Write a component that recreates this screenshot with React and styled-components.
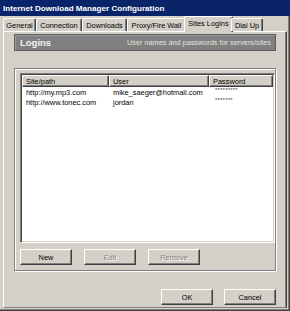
import React from 'react';
import styled, { createGlobalStyle } from 'styled-components';

const GlobalStyle = createGlobalStyle`
  html, body {
    margin: 0;
    padding: 0;
    background: #d4d0c8;
  }
  * {
    box-sizing: border-box;
  }
`;

const Window = styled.div`
  width: 290px;
  height: 311px;
  background: #d4d0c8;
  display: flex;
  flex-direction: column;
  font-family: 'Liberation Sans', Arial, sans-serif;
  font-size: 7.4px;
  color: #000;
  box-shadow: inset -1px -1px 0 #404040, inset -2px -2px 0 #808080;
  overflow: hidden;
`;

const TitleBar = styled.div`
  height: 16px;
  flex: none;
  background: #0a246a;
  color: #fff;
  font-weight: bold;
  font-size: 8.1px;
  display: flex;
  align-items: center;
  padding-left: 3px;
`;

const Body = styled.div`
  flex: 1;
  display: flex;
  flex-direction: column;
  padding: 0 3px 3px 3px;
`;

const TabStrip = styled.div`
  height: 15px;
  flex: none;
  display: flex;
  align-items: flex-end;
  position: relative;
  z-index: 1;
`;

const Tab = styled.div`
  width: ${p => p.$w}px;
  height: ${p => (p.$active ? 16 : 13)}px;
  margin: ${p => (p.$active ? '0 -2px -1px -2px' : '0')};
  padding-bottom: ${p => (p.$active ? 2 : 0)}px;
  background: #d4d0c8;
  border-top: 1px solid #fff;
  border-left: 1px solid #fff;
  border-right: 1px solid #404040;
  box-shadow: inset -1px 0 0 #808080;
  border-radius: 2px 2px 0 0;
  display: flex;
  align-items: center;
  justify-content: center;
  white-space: nowrap;
`;

const Panel = styled.div`
  flex: 1;
  display: flex;
  flex-direction: column;
  border-top: 1px solid #fff;
  border-left: 1px solid #fff;
  border-right: 1px solid #404040;
  border-bottom: 1px solid #808080;
  box-shadow: inset -1px 0 0 #808080;
  padding: 0 10px 0 10px;
`;

const HeaderBar = styled.div`
  margin-top: 2px;
  height: 17px;
  background: #808080;
  border: 1px solid #5c5c5c;
  box-shadow: inset 1px 1px 0 #9a9a9a;
  display: flex;
  align-items: center;
  justify-content: space-between;
  padding: 0 4px 0 5px;
`;

const HeaderTitle = styled.span`
  font-weight: bold;
  font-size: 9.5px;
  color: #f2f2f2;
`;

const HeaderNote = styled.span`
  font-size: 7.3px;
  color: #e4e2dc;
`;

const GroupBox = styled.div`
  margin-top: 17px;
  border: 1px solid #808080;
  box-shadow: inset 1px 1px 0 #fff, 1px 1px 0 #fff;
  padding: 4px 0 5px 5px;
  display: flex;
  flex-direction: column;
`;

const ListView = styled.div`
  height: 170px;
  background: #fff;
  border-top: 1px solid #808080;
  border-left: 1px solid #808080;
  border-right: 1px solid #fff;
  border-bottom: 1px solid #fff;
  box-shadow: inset 1px 1px 0 #404040, inset -1px -1px 0 #d4d0c8;
  padding: 1px;
  display: flex;
  flex-direction: column;
`;

const Row = styled.div`
  display: grid;
  grid-template-columns: 87px 100px 1fr;
  height: ${p => (p.$head ? 12 : 10)}px;
  align-items: center;
`;

const HeadCell = styled.div`
  height: 12px;
  background: #d4d0c8;
  border-top: 1px solid #fff;
  border-left: 1px solid #fff;
  border-right: 1px solid #404040;
  border-bottom: 1px solid #404040;
  box-shadow: inset -1px -1px 0 #808080;
  display: flex;
  align-items: center;
  padding-left: 3px;
  white-space: nowrap;
`;

const Cell = styled.div`
  padding-left: ${p => (p.$stars ? 6 : 4)}px;
  white-space: nowrap;
  overflow: hidden;
  font-size: ${p => (p.$stars ? 6 : 7.4)}px;
  letter-spacing: ${p => (p.$stars ? '0.2px' : 'normal')};
  align-self: ${p => (p.$stars ? 'start' : 'center')};
  color: ${p => (p.$stars ? '#444' : '#000')};
`;

const ButtonRow = styled.div`
  display: flex;
  gap: ${p => p.$gap}px;
  margin-top: ${p => p.$top}px;
  justify-content: ${p => (p.$right ? 'flex-end' : 'flex-start')};
`;

const Button = styled.div`
  width: 52px;
  height: 16px;
  background: #d4d0c8;
  border-top: 1px solid #fff;
  border-left: 1px solid #fff;
  border-right: 1px solid #404040;
  border-bottom: 1px solid #404040;
  box-shadow: inset -1px -1px 0 #808080;
  display: flex;
  align-items: center;
  justify-content: center;
  color: ${p => (p.$disabled ? '#808080' : '#000')};
  text-shadow: ${p => (p.$disabled ? '1px 1px 0 #fff' : 'none')};
`;

const tabs = [
  { label: 'General', w: 33 },
  { label: 'Connection', w: 46 },
  { label: 'Downloads', w: 45 },
  { label: 'Proxy/Fire Wall', w: 59 },
  { label: 'Sites Logins', w: 49, active: true },
  { label: 'Dial Up', w: 32 }
];

const logins = [
  { site: 'http://my.mp3.com', user: 'mike_saeger@hotmail.com', pass: '*********' },
  { site: 'http://www.tonec.com', user: 'jordan', pass: '*******' }
];

export default function App() {
  return (
    <>
      <GlobalStyle />
      <Window>
        <TitleBar>Internet Download Manager Configuration</TitleBar>
        <Body>
          <TabStrip>
            {tabs.map(t => (
              <Tab key={t.label} $w={t.w} $active={t.active}>
                {t.label}
              </Tab>
            ))}
          </TabStrip>
          <Panel>
            <HeaderBar>
              <HeaderTitle>Logins</HeaderTitle>
              <HeaderNote>User names and passwords for servers/sites</HeaderNote>
            </HeaderBar>
            <GroupBox>
              <ListView>
                <Row $head>
                  <HeadCell>Site/path</HeadCell>
                  <HeadCell>User</HeadCell>
                  <HeadCell>Password</HeadCell>
                </Row>
                {logins.map(l => (
                  <Row key={l.site}>
                    <Cell>{l.site}</Cell>
                    <Cell>{l.user}</Cell>
                    <Cell $stars>{l.pass}</Cell>
                  </Row>
                ))}
              </ListView>
              <ButtonRow $gap={12} $top={6}>
                <Button>New</Button>
                <Button $disabled>Edit</Button>
                <Button $disabled>Remove</Button>
              </ButtonRow>
            </GroupBox>
            <ButtonRow $gap={11} $top={18} $right>
              <Button>OK</Button>
              <Button>Cancel</Button>
            </ButtonRow>
          </Panel>
        </Body>
      </Window>
    </>
  );
}
